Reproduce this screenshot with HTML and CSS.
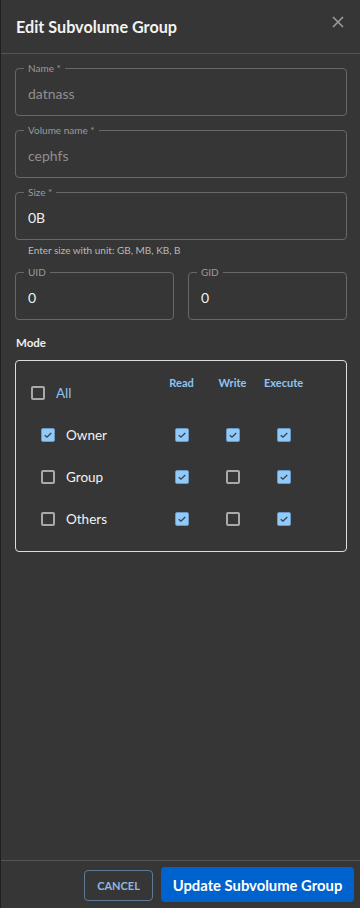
FILE: index.html
```html
<!DOCTYPE html>
<html>
<head>
<meta charset="utf-8">
<link rel="stylesheet" href="styles.css">
</head>
<body>
<div class="panel">
  <header class="head">
    <h1 class="title">Edit Subvolume Group</h1>
    <span class="close" aria-label="close">
      <svg width="14" height="14" viewBox="0 0 14 14"><path d="M2 2L12 12M12 2L2 12" stroke="#9c9c9c" stroke-width="1.6" fill="none"/></svg>
    </span>
  </header>
  <main class="content">
    <div class="field"><span class="label">Name *</span><span class="value muted">datnass</span></div>
    <div class="field"><span class="label">Volume name *</span><span class="value muted">cephfs</span></div>
    <div class="field size"><span class="label">Size *</span><span class="value">0B</span></div>
    <div class="helper">Enter size with unit: GB, MB, KB, B</div>
    <div class="pair">
      <div class="field"><span class="label">UID</span><span class="value">0</span></div>
      <div class="field"><span class="label">GID</span><span class="value">0</span></div>
    </div>
    <div class="mode-title">Mode</div>
    <div class="mode">
      <div class="row head-row">
        <div class="who all"><span class="cb"></span><span class="all-text">All</span></div>
        <div class="colh">Read</div>
        <div class="colh">Write</div>
        <div class="colh">Execute</div>
      </div>
      <div class="row">
        <div class="who"><span class="cb on"><svg viewBox="0 0 14 14"><path d="M3.2 7.2L5.8 9.6L10.8 4.6" stroke="#3a3f45" stroke-width="1.5" fill="none"/></svg></span><span class="name">Owner</span></div>
        <div class="cell"><span class="cb on"><svg viewBox="0 0 14 14"><path d="M3.2 7.2L5.8 9.6L10.8 4.6" stroke="#3a3f45" stroke-width="1.5" fill="none"/></svg></span></div>
        <div class="cell"><span class="cb on"><svg viewBox="0 0 14 14"><path d="M3.2 7.2L5.8 9.6L10.8 4.6" stroke="#3a3f45" stroke-width="1.5" fill="none"/></svg></span></div>
        <div class="cell"><span class="cb on"><svg viewBox="0 0 14 14"><path d="M3.2 7.2L5.8 9.6L10.8 4.6" stroke="#3a3f45" stroke-width="1.5" fill="none"/></svg></span></div>
      </div>
      <div class="row">
        <div class="who"><span class="cb"></span><span class="name">Group</span></div>
        <div class="cell"><span class="cb on"><svg viewBox="0 0 14 14"><path d="M3.2 7.2L5.8 9.6L10.8 4.6" stroke="#3a3f45" stroke-width="1.5" fill="none"/></svg></span></div>
        <div class="cell"><span class="cb"></span></div>
        <div class="cell"><span class="cb on"><svg viewBox="0 0 14 14"><path d="M3.2 7.2L5.8 9.6L10.8 4.6" stroke="#3a3f45" stroke-width="1.5" fill="none"/></svg></span></div>
      </div>
      <div class="row">
        <div class="who"><span class="cb"></span><span class="name">Others</span></div>
        <div class="cell"><span class="cb on"><svg viewBox="0 0 14 14"><path d="M3.2 7.2L5.8 9.6L10.8 4.6" stroke="#3a3f45" stroke-width="1.5" fill="none"/></svg></span></div>
        <div class="cell"><span class="cb"></span></div>
        <div class="cell"><span class="cb on"><svg viewBox="0 0 14 14"><path d="M3.2 7.2L5.8 9.6L10.8 4.6" stroke="#3a3f45" stroke-width="1.5" fill="none"/></svg></span></div>
      </div>
    </div>
  </main>
  <footer class="foot">
    <button class="btn cancel">CANCEL</button>
    <button class="btn primary">Update Subvolume Group</button>
  </footer>
</div>
</body>
</html>
```

FILE: styles.css
```css
* { box-sizing: border-box; }
html, body {
  margin: 0;
  padding: 0;
  background: #363636;
}
body {
  width: 360px;
  height: 908px;
  overflow: hidden;
  font-family: Lato, "Open Sans", sans-serif;
  color: #e8e8e8;
}
.panel {
  height: 908px;
  display: flex;
  flex-direction: column;
  border-left: 1px solid #1f1f1f;
  background: #363636;
}
.head {
  height: 54px;
  border-bottom: 1px solid #555555;
  display: flex;
  align-items: center;
  justify-content: space-between;
  padding: 0 15px 0 15px;
  flex-shrink: 0;
}
.title {
  margin: 0;
  font-size: 16.2px;
  font-weight: 700;
  color: #f2f2f2;
}
.close {
  display: flex;
  margin-top: -10px;
}
.content {
  flex: 1;
  padding: 14px 13px 0 14px;
  display: flex;
  flex-direction: column;
}
.field {
  position: relative;
  height: 48px;
  border: 1px solid #686868;
  border-radius: 4px;
  display: flex;
  align-items: center;
  padding: 3px 12px 0 12px;
  margin-bottom: 14px;
}
.field.size { margin-bottom: 4px; }
.label {
  position: absolute;
  top: -7px;
  left: 8px;
  padding: 0 4px;
  background: #363636;
  font-size: 10px;
  line-height: 12px;
  color: #9a9a9a;
}
.value {
  font-size: 14px;
  color: #f0f0f0;
}
.value.muted { color: #8f8f8f; }
.helper {
  font-size: 10px;
  color: #b8b8b8;
  padding-left: 13px;
  line-height: 12px;
  margin-bottom: 16px;
}
.pair {
  display: grid;
  grid-template-columns: 1fr 1fr;
  gap: 14px;
}
.pair .field { margin-bottom: 0; }
.mode-title {
  font-size: 11.5px;
  font-weight: 700;
  color: #eeeeee;
  margin: 16px 0 10px 1px;
  line-height: 14px;
}
.mode {
  border: 1px solid #dcdcdc;
  border-radius: 4px;
  padding-bottom: 11px;
}
.row {
  display: grid;
  grid-template-columns: 140px 51px 51px 51px;
  height: 42px;
  align-items: center;
}
.head-row {
  height: 53px;
  align-items: start;
}
.who {
  display: flex;
  align-items: center;
  padding-left: 25px;
}
.who.all {
  padding-left: 15px;
  margin-top: 24px;
}
.cell {
  display: flex;
  justify-content: center;
}
.colh {
  margin-top: 15px;
  text-align: center;
  font-size: 11px;
  font-weight: 700;
  color: #90c4f2;
  line-height: 14px;
}
.cb {
  width: 14px;
  height: 14px;
  border: 2px solid #a9a9a9;
  border-radius: 2px;
  display: inline-flex;
  flex-shrink: 0;
}
.cb.on {
  border: 1px solid #6a9ac8;
  background: #90caf9;
}
.cb svg { width: 12px; height: 12px; }
.all-text {
  margin-left: 11px;
  font-size: 13.5px;
  color: #8fc3f3;
}
.name {
  margin-left: 11px;
  font-size: 13.5px;
  color: #f2f2f2;
}
.foot {
  height: 48px;
  border-top: 1px solid #555555;
  display: flex;
  justify-content: flex-end;
  align-items: center;
  gap: 8px;
  padding-right: 6px;
  flex-shrink: 0;
}
.btn {
  font-family: Lato, "Open Sans", sans-serif;
  border-radius: 4px;
  cursor: pointer;
}
.cancel {
  height: 31px;
  width: 69px;
  background: transparent;
  border: 1px solid #5d7a96;
  color: #8fb8e0;
  font-size: 11px;
  font-weight: 700;
  padding: 0;
  margin-top: 2px;
}
.primary {
  height: 35px;
  width: 193px;
  background: #0062cc;
  border: none;
  color: #ffffff;
  font-size: 14.8px;
  font-weight: 700;
  padding: 0;
}
```
